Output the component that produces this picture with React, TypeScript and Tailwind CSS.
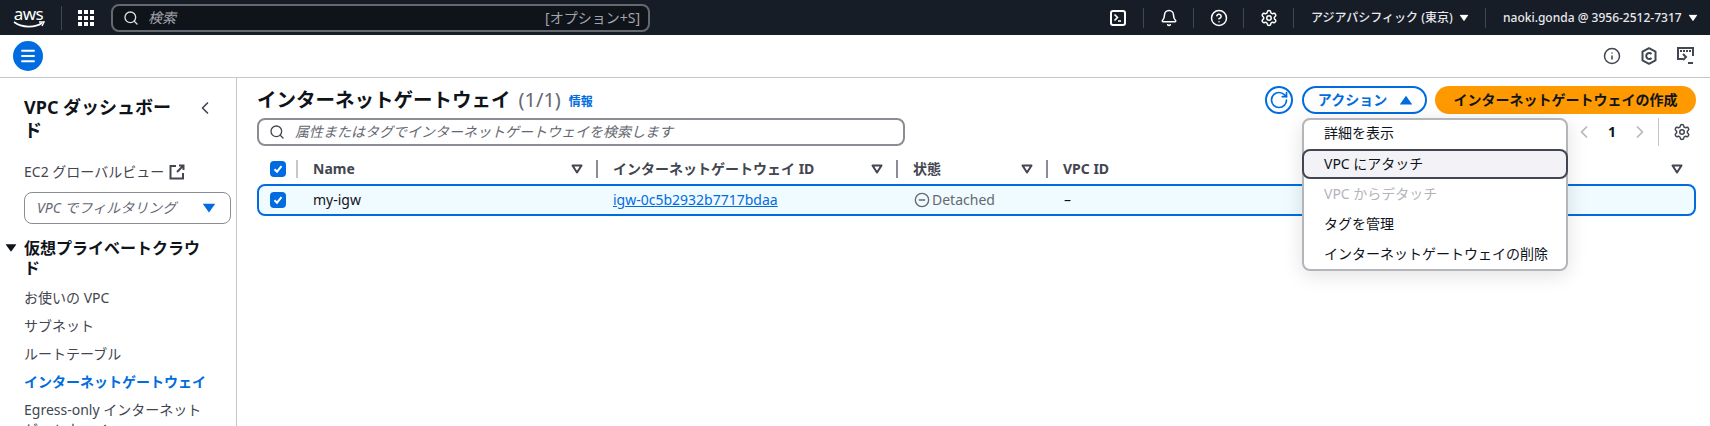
import React from "react";
import { Bell, ChevronLeft, ChevronRight, CircleHelp, CircleMinus, Info, Menu, RotateCw, Search, Settings } from "lucide-react";

const Caret = ({ className = "", up = false }: { className?: string; up?: boolean }) => (
  <svg width="10" height="8" viewBox="0 0 10 8" className={className}>
    <path d={up ? "M5 0.5 L10 7.5 L0 7.5 Z" : "M0 0.5 L10 0.5 L5 7.5 Z"} fill="currentColor" />
  </svg>
);

const FilterCaret = () => (
  <svg width="12" height="10" viewBox="0 0 12 10" className="text-[#424650]">
    <path d="M1.5 1.5 H10.5 L6 8.5 Z" fill="none" stroke="currentColor" strokeWidth="2" strokeLinejoin="round" />
  </svg>
);

const Check = () => (
  <span className="flex h-4 w-4 items-center justify-center rounded-[4px] bg-[#006ce0]">
    <svg width="12" height="12" viewBox="0 0 12 12">
      <path d="M2.5 6.2 L5 8.7 L9.5 3.2" fill="none" stroke="white" strokeWidth="2" />
    </svg>
  </span>
);

const Sep = () => <span className="h-5 w-px bg-[#424650]" />;

const HeadCell = ({ label, first = false }: { label: string; first?: boolean }) => (
  <div className="flex h-full items-center">
    <div className={`flex h-[18px] w-full items-center justify-between pr-[13px] text-sm font-bold text-[#424650] ${first ? "border-l-2 border-[#c6c6cd] pl-[15px]" : "border-l-2 border-[#8c8c94] pl-[15px]"}`}>
      <span>{label}</span>
      <FilterCaret />
    </div>
  </div>
);

const NavItem = ({ label, active = false }: { label: string; active?: boolean }) => (
  <li className={`py-[4px] text-sm leading-[20px] ${active ? "font-bold text-[#006ce0]" : "text-[#424650]"}`}>{label}</li>
);

const MenuItem = ({ label, focused = false, disabled = false, short = false }: { label: string; focused?: boolean; disabled?: boolean; short?: boolean }) => (
  <div
    className={`flex items-center text-sm ${short ? "h-[29px] pb-[3px]" : "h-[30px]"} ${focused ? "-mx-[2px] rounded-lg border-2 border-[#424650] bg-[#f3f3f7] pl-5" : "pl-5"} ${disabled ? "text-[#b4b4bb]" : "text-[#0f141a]"}`}
  >
    {label}
  </div>
);

export default function App() {
  return (
    <div className="flex h-[426px] w-[1710px] flex-col overflow-hidden bg-white font-['Noto_Sans','Noto_Sans_CJK_JP',sans-serif]">
      {/* Top navigation */}
      <header className="flex h-[35px] shrink-0 items-center bg-[#161d26] text-white">
        <div className="flex w-[61px] flex-col items-center pr-[4px]">
          <span className="text-[17px] leading-[14px] tracking-[-0.5px]">aws</span>
          <svg width="32" height="8" viewBox="0 0 32 8">
            <path d="M1 1 C9 7 22 7 29 2" fill="none" stroke="white" strokeWidth="1.6" />
            <path d="M26 1 L31 1 L29 5" fill="none" stroke="white" strokeWidth="1.4" />
          </svg>
        </div>
        <span className="h-[24px] w-px bg-[#424650]" />
        <div className="ml-4 grid w-4 grid-cols-3 gap-[2px]">
          {Array.from({ length: 9 }).map((_, i) => (
            <span key={i} className="h-[4px] w-[4px] bg-white" />
          ))}
        </div>
        <div className="ml-[17px] flex h-[28px] w-[539px] items-center rounded-lg border-2 border-[#656871] bg-[#0f141a] pl-[10px] pr-[8px]">
          <Search size={16} strokeWidth={2} className="text-[#dedee3]" />
          <span className="ml-[9px] text-sm italic text-[#a4a4ad]">検索</span>
          <span className="ml-auto text-sm text-[#a4a4ad]">[オプション+S]</span>
        </div>
        <div className="ml-auto flex h-full items-center">
          <div className="flex w-[50px] justify-center">
            <svg width="16" height="16" viewBox="0 0 16 16" fill="none" stroke="white" strokeWidth="2">
              <rect x="1" y="1" width="14" height="14" rx="2" />
              <path d="M4.5 4.5 L7.5 7.5 L4.5 10.5 M8 11 H11" strokeWidth="1.6" />
            </svg>
          </div>
          <Sep />
          <div className="flex w-[49px] justify-center">
            <Bell size={18} strokeWidth={2} />
          </div>
          <Sep />
          <div className="flex w-[49px] justify-center">
            <CircleHelp size={18} strokeWidth={2} />
          </div>
          <Sep />
          <div className="flex w-[49px] justify-center">
            <Settings size={18} strokeWidth={2} />
          </div>
          <Sep />
          <div className="flex w-[191px] items-center pl-[17px] text-[12px] font-medium text-[#e8e8ec]">
            <span>アジアパシフィック (東京)</span>
            <Caret className="ml-[6px] scale-90 text-white" />
          </div>
          <Sep />
          <div className="flex w-[224px] items-center pl-[17px] pr-3 text-[12px] font-medium text-[#e8e8ec]">
            <span>naoki.gonda @ 3956-2512-7317</span>
            <Caret className="ml-[6px] scale-90 text-white" />
          </div>
        </div>
      </header>

      {/* Secondary bar */}
      <div className="flex h-[43px] shrink-0 items-center border-b border-[#c6c6cd] pl-[13px] pr-4">
        <button className="flex h-[30px] w-[30px] items-center justify-center rounded-full bg-[#006ce0] text-white">
          <Menu size={18} strokeWidth={2.5} />
        </button>
        <div className="ml-auto flex items-center gap-[20px] text-[#424650]">
          <Info size={18} strokeWidth={2} />
          <svg width="16" height="18" viewBox="0 0 16 18" fill="none" stroke="currentColor" strokeWidth="2">
            <path d="M8 1.2 L14.5 4.6 V13.4 L8 16.8 L1.5 13.4 V4.6 Z" strokeLinejoin="round" />
            <path d="M10.5 7 A3 3 0 1 0 10.5 11" />
          </svg>
          <svg width="17" height="18" viewBox="0 0 17 18" fill="none" stroke="currentColor" strokeWidth="2">
            <path d="M6 12 H1 V1 H16 V9" />
            <path d="M3 4 H14" strokeDasharray="2 1" />
            <path d="M6 7 L9 10 L6 13" />
            <path d="M11 16 H16" />
          </svg>
        </div>
      </div>

      <div className="flex min-h-0 flex-1">
        {/* Sidebar */}
        <aside className="w-[237px] shrink-0 overflow-hidden border-r border-[#c6c6cd] pl-6 pt-[18px]">
          <div className="flex items-start">
            <h2 className="w-[152px] text-[18px] font-bold leading-[23px] text-[#0f141a]">VPC ダッシュボード</h2>
            <ChevronLeft size={20} strokeWidth={2} className="ml-[19px] mt-[2px] text-[#424650]" />
          </div>
          <div className="mt-[20px] flex items-center text-sm leading-[20px] text-[#424650]">
            <span>EC2 グローバルビュー</span>
            <svg width="16" height="16" viewBox="0 0 16 16" fill="none" stroke="currentColor" strokeWidth="2" className="ml-[5px]">
              <path d="M7 2 H1.5 V14.5 H14 V9" />
              <path d="M10 1.5 H14.5 V6 M14.5 1.5 L8 8" />
            </svg>
          </div>
          <div className="mt-[10px] flex h-8 w-[207px] items-center justify-between rounded-lg border border-[#8c8c94] pl-3 pr-[16px]">
            <span className="text-sm italic text-[#656871]">VPC でフィルタリング</span>
            <Caret className="scale-125 text-[#006ce0]" />
          </div>
          <div className="relative mt-[14px] w-[180px]">
            <Caret className="absolute -left-[18px] top-[6px] scale-110 text-[#0f141a]" />
            <h3 className="text-[16px] font-bold leading-[20px] text-[#0f141a]">仮想プライベートクラウド</h3>
          </div>
          <ul className="mt-[6px] w-[190px]">
            <NavItem label="お使いの VPC" />
            <NavItem label="サブネット" />
            <NavItem label="ルートテーブル" />
            <NavItem label="インターネットゲートウェイ" active />
            <NavItem label="Egress-only インターネットゲートウェイ" />
          </ul>
        </aside>

        {/* Main content */}
        <main className="relative min-w-0 flex-1 pl-5 pr-[14px] pt-2">
          <div className="flex h-7 items-center">
            <h1 className="text-[19.5px] font-bold text-[#0f141a]">インターネットゲートウェイ</h1>
            <span className="ml-[8px] text-[20px] text-[#656871]">(1/1)</span>
            <span className="ml-[8px] mt-[3px] text-[12px] font-bold text-[#006ce0]">情報</span>
            <div className="ml-auto flex items-center">
              <button className="flex h-7 w-7 items-center justify-center rounded-full border-2 border-[#006ce0] text-[#006ce0]">
                <RotateCw size={20} strokeWidth={2} />
              </button>
              <button className="ml-[9px] flex h-7 w-[125px] items-center justify-center gap-[14px] rounded-full border-2 border-[#006ce0] text-sm font-bold text-[#006ce0]">
                アクション
                <Caret up className="scale-125" />
              </button>
              <button className="ml-2 flex h-7 w-[261px] items-center justify-center rounded-full bg-[#ff9900] text-sm font-bold text-[#0f141a]">
                インターネットゲートウェイの作成
              </button>
            </div>
          </div>

          <div className="mt-1 flex h-7 items-center">
            <div className="flex h-7 w-[648px] items-center rounded-lg border-2 border-[#8c8c94] pl-[10px]">
              <Search size={16} strokeWidth={2} className="text-[#424650]" />
              <span className="ml-[10px] text-sm italic text-[#656871]">属性またはタグでインターネットゲートウェイを検索します</span>
            </div>
            <div className="ml-auto flex h-full items-center">
              <ChevronLeft size={20} strokeWidth={2} className="text-[#b4b4bb]" />
              <span className="mx-[13px] w-[10px] text-center text-sm font-bold text-[#0f141a]">1</span>
              <ChevronRight size={20} strokeWidth={2} className="text-[#b4b4bb]" />
              <span className="ml-[8px] h-full w-px bg-[#c6c6cd]" />
              <Settings size={18} strokeWidth={2} className="ml-[14px] mr-[5px] text-[#424650]" />
            </div>
          </div>

          {/* Table */}
          <div className="mt-1 grid h-[34px] grid-cols-[39px_300px_300px_150px_1fr] items-center pt-[3px]">
            <div className="flex h-full items-center pl-[13px]">
              <Check />
            </div>
            <HeadCell label="Name" first />
            <HeadCell label="インターネットゲートウェイ ID" />
            <HeadCell label="状態" />
            <HeadCell label="VPC ID" />
          </div>
          <div className="grid h-8 grid-cols-[39px_300px_300px_150px_1fr] items-center rounded-lg border-2 border-[#006ce0] bg-[#f0fbff] text-sm text-[#0f141a]">
            <div className="flex h-full items-center pl-[11px]">
              <Check />
            </div>
            <div className="pl-[15px]">my-igw</div>
            <a className="pl-[15px] text-[#006ce0] underline">igw-0c5b2932b7717bdaa</a>
            <div className="flex items-center gap-[2px] pl-4 text-[#656871]">
              <CircleMinus size={16} strokeWidth={2} />
              Detached
            </div>
            <div className="pl-4">–</div>
          </div>

          {/* Actions dropdown */}
          <div className="absolute left-[1065px] top-[40px] w-[266px] rounded-lg border-2 border-[#b4b4bb] bg-white shadow-[0_4px_20px_rgba(0,7,22,0.12)]">
            <MenuItem label="詳細を表示" short />
            <MenuItem label="VPC にアタッチ" focused />
            <MenuItem label="VPC からデタッチ" disabled />
            <MenuItem label="タグを管理" />
            <MenuItem label="インターネットゲートウェイの削除" />
          </div>
        </main>
      </div>
    </div>
  );
}
